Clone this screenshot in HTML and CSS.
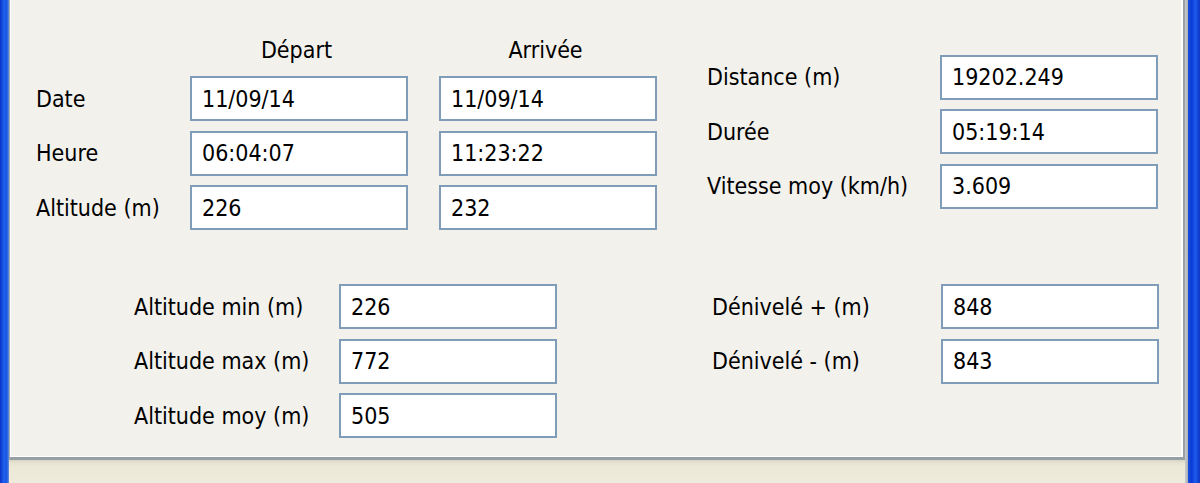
FILE: index.html
```html
<!DOCTYPE html>
<html lang="fr">
<head>
    <meta charset="UTF-8">
    <title>Statistiques du parcours</title>
    <link rel="stylesheet" href="styles.css">
</head>
<body>

<div class="window">
    <div class="edge edge-left"></div>

    <div class="client">
        <div class="panel">

            <div class="row row-top">
                <div class="grid grid-times">
                    <span></span>
                    <span class="head">Départ</span>
                    <span class="head">Arrivée</span>

                    <span class="label">Date</span>
                    <div class="field">11/09/14</div>
                    <div class="field">11/09/14</div>

                    <span class="label">Heure</span>
                    <div class="field">06:04:07</div>
                    <div class="field">11:23:22</div>

                    <span class="label">Altitude (m)</span>
                    <div class="field">226</div>
                    <div class="field">232</div>
                </div>

                <div class="grid grid-totals">
                    <span class="label">Distance (m)</span>
                    <div class="field">19202.249</div>

                    <span class="label">Durée</span>
                    <div class="field">05:19:14</div>

                    <span class="label">Vitesse moy (km/h)</span>
                    <div class="field">3.609</div>
                </div>
            </div>

            <div class="row row-bottom">
                <div class="grid grid-alt">
                    <span class="label">Altitude min (m)</span>
                    <div class="field">226</div>

                    <span class="label">Altitude max (m)</span>
                    <div class="field">772</div>

                    <span class="label">Altitude moy (m)</span>
                    <div class="field">505</div>
                </div>

                <div class="grid grid-elev">
                    <span class="label">Dénivelé + (m)</span>
                    <div class="field">848</div>

                    <span class="label">Dénivelé - (m)</span>
                    <div class="field">843</div>
                </div>
            </div>

        </div>
        <div class="status"></div>
    </div>

    <div class="edge edge-right"></div>
</div>

</body>
</html>
```

FILE: styles.css
```css
html, body {
    margin: 0;
    padding: 0;
}
body {
    width: 1200px;
    height: 483px;
    overflow: hidden;
    background: #ece9d8;
    font-family: "DejaVu Sans Condensed", "DejaVu Sans", sans-serif;
    font-stretch: condensed;
    font-size: 23px;
    color: #000;
}
.window {
    display: flex;
    height: 483px;
}

/* blue XP frame */
.edge-left {
    width: 9px;
    background: linear-gradient(to right, #0a32c8, #1f62ec 45%, #1556e6 75%, #6b8fd8);
}
.edge-right {
    width: 12px;
    background: linear-gradient(to right, #1a4fd8, #0a3ad8 30%, #1e5cec 60%, #0c35c4);
}

.client {
    flex: 1;
    display: flex;
    flex-direction: column;
    padding-right: 3px;
    background: linear-gradient(to right, #ece9d8 0, #ece9d8 calc(100% - 3px), #c9ccd0 calc(100% - 3px), #a9aeb4 100%);
}
.panel {
    height: 460px;
    box-sizing: border-box;
    background: #f2f1ec;
    border-left: 1px solid #a7abae;
    border-right: 2px solid #98a0a6;
    border-bottom: 3px solid #96a0a4;
    box-shadow: inset 1px 0 #fff, inset -2px 0 #fff, inset 0 -1px #fff;
}
.status {
    flex: 1;
    background: linear-gradient(to bottom, #d8d5c4 0, #e6e3d2 3px, #ece9d8 7px, #eeebdc 100%);
}

/* rows of fields */
.row {
    display: flex;
    align-items: flex-start;
}
.row-top {
    padding: 32.5px 0 0 26px;
}
.row-bottom {
    margin-top: 54px;
    padding-left: 124px;
}

.grid {
    display: grid;
    grid-auto-rows: 45px;
    row-gap: 9.5px;
    align-items: center;
}
.grid-times {
    grid-template-columns: 123px 218px 218px;
    grid-template-rows: 34px;
    column-gap: 31px;
}
.grid-totals {
    grid-template-columns: 233px 218px;
    margin: 22px 0 0 50px;
}
.grid-alt {
    grid-template-columns: 205px 218px;
}
.grid-elev {
    grid-template-columns: 229px 218px;
    margin-left: 155px;
}

.head {
    text-align: center;
    margin-left: -5px;
}
.label {
    white-space: nowrap;
}
.field {
    height: 45px;
    box-sizing: border-box;
    display: flex;
    align-items: center;
    padding-left: 10px;
    background: #fff;
    border: 2px solid #7f9db9;
}
```
